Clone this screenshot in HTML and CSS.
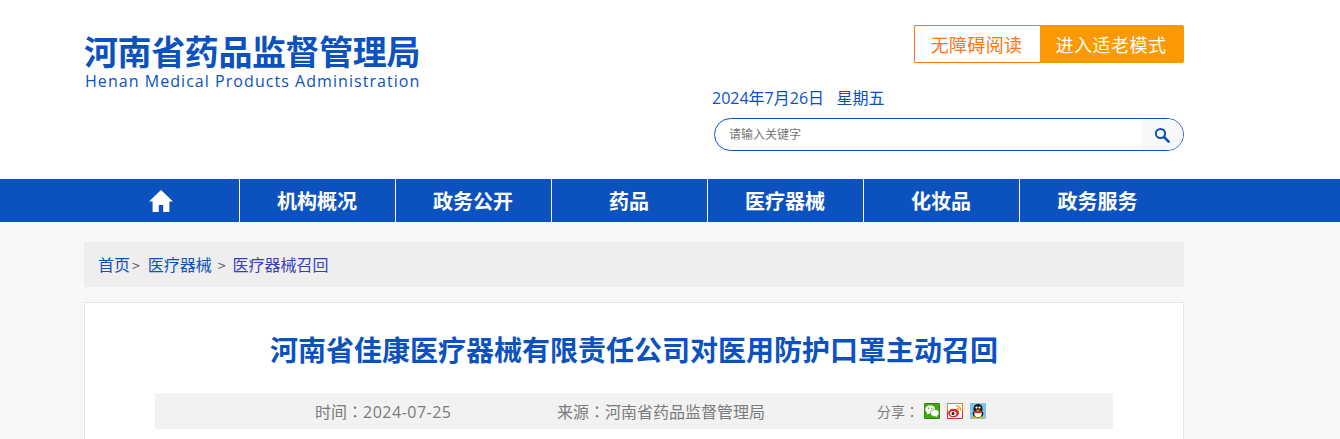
FILE: index.html
```html
<!DOCTYPE html>
<html lang="zh-CN">
<head>
<meta charset="utf-8">
<title>河南省佳康医疗器械有限责任公司对医用防护口罩主动召回</title>
<link rel="stylesheet" href="styles.css">
</head>
<body>
<header class="header">
  <div class="wrap header-inner">
    <div class="logo">
      <div class="logo-cn">河南省药品监督管理局</div>
      <div class="logo-en">Henan Medical Products Administration</div>
    </div>
    <div class="tools">
      <div class="access">
        <a class="access-a">无障碍阅读</a>
        <a class="access-b">进入适老模式</a>
      </div>
      <div class="date">2024年7月26日&nbsp;&nbsp;&nbsp;星期五</div>
      <div class="search">
        <span class="search-text">请输入关键字</span>
        <span class="search-btn">
          <svg width="16" height="16" viewBox="0 0 16 16"><circle cx="6.5" cy="6.5" r="4.6" fill="none" stroke="#0b52bf" stroke-width="2"/><path d="M10 10l4.6 4.6" stroke="#0b52bf" stroke-width="2.6" stroke-linecap="round"/></svg>
        </span>
      </div>
    </div>
  </div>
</header>
<nav class="nav">
  <div class="wrap nav-inner">
    <a class="nav-item nav-home">
      <svg width="26" height="24" viewBox="0 0 26 24"><path d="M13 1L1 12.6h3.6V23h6.2v-7h4.4v7h6.2V12.6H25z" fill="#fff"/></svg>
    </a>
    <a class="nav-item">机构概况</a>
    <a class="nav-item">政务公开</a>
    <a class="nav-item">药品</a>
    <a class="nav-item">医疗器械</a>
    <a class="nav-item">化妆品</a>
    <a class="nav-item nav-last">政务服务</a>
  </div>
</nav>
<main class="wrap">
  <div class="crumb">
    <a>首页</a><span class="sep-a">&gt;</span><a>医疗器械</a><span class="sep-b">&gt;</span><a class="crumb-last">医疗器械召回</a>
  </div>
  <article class="card">
    <h1 class="title">河南省佳康医疗器械有限责任公司对医用防护口罩主动召回</h1>
    <div class="meta">
      <span class="meta-time">时间<span class="colon" lang="zh-Hant">：</span><span class="num">2024-07-25</span></span>
      <span class="meta-source">来源<span class="colon" lang="zh-Hant">：</span>河南省药品监督管理局</span>
      <span class="share">
        <span class="share-label">分享<span class="colon" lang="zh-Hant">：</span></span>
        <svg class="share-icon" width="16" height="16" viewBox="0 0 16 16"><rect width="16" height="16" rx="1" fill="#3fa714"/><rect x=".5" y=".5" width="15" height="15" rx="1" fill="none" stroke="#2f8a0c"/><ellipse cx="6.2" cy="6.4" rx="5" ry="4.2" fill="#fff"/><path d="M3.600 9.500l-.6 2.300 2.800-1.500z" fill="#fff"/><circle cx="4.600" cy="5.200" r=".7" fill="#3fa714"/><circle cx="7.800" cy="5.200" r=".7" fill="#3fa714"/><ellipse cx="10.800" cy="10" rx="4.200" ry="3.500" fill="#fff" stroke="#3fa714" stroke-width=".8"/><path d="M12.500 12.800l.6 1.500-2-1z" fill="#fff"/></svg>
        <svg class="share-icon" width="16" height="16" viewBox="0 0 16 16"><rect x=".5" y=".5" width="15" height="15" fill="#fff" stroke="#e0301c"/><path d="M.5 8V.5H15.500V8" fill="none" stroke="#f0802a"/><ellipse cx="6.600" cy="10" rx="5.400" ry="4.200" fill="#d9252a"/><ellipse cx="6.200" cy="10.400" rx="3.200" ry="2.500" fill="#fff"/><circle cx="6" cy="10.600" r="1.500" fill="#222"/><path d="M9.500 3a4.200 4.200 0 0 1 4.200 4.800M9.800 5.300a2 2 0 0 1 1.900 2.300" fill="none" stroke="#f39a1e" stroke-width="1.300"/></svg>
        <svg class="share-icon" width="16" height="16" viewBox="0 0 16 16"><rect width="16" height="16" rx="1" fill="#7cc4ee"/><ellipse cx="8" cy="6" rx="4.600" ry="5.200" fill="#1b1b1b"/><ellipse cx="8" cy="10.800" rx="5.400" ry="4" fill="#1b1b1b"/><ellipse cx="8" cy="10.800" rx="3.700" ry="3.400" fill="#fff"/><path d="M3.400 8h9.200l-1.200 2H4.600z" fill="#e8261b"/><path d="M5.600 6.800h4.800L8 8.200z" fill="#f7b500"/><circle cx="6.500" cy="4.600" r="1.100" fill="#fff"/><circle cx="9.500" cy="4.600" r="1.100" fill="#fff"/><ellipse cx="4.800" cy="14.500" rx="2.400" ry="1" fill="#f7b500"/><ellipse cx="11.200" cy="14.500" rx="2.400" ry="1" fill="#f7b500"/></svg>
      </span>
    </div>
  </article>
</main>
</body>
</html>
```

FILE: styles.css
```css
* { box-sizing: border-box; }
html, body { margin: 0; padding: 0; height: 439px; overflow: hidden; }
body {
  background: #f6f8f8;
  font-family: "Noto Sans CJK SC", "Open Sans", sans-serif;
  color: #0b52bf;
}
.wrap { width: 1100px; margin-left: 84px; }
.header { background: #fff; height: 179px; }
.header-inner { display: flex; justify-content: space-between; height: 179px; }
.logo { padding-top: 35px; width: 340px; }
.logo-cn {
  font-family: "Liberation Sans", "Noto Sans CJK SC", sans-serif;
  font-size: 34px;
  font-weight: 700;
  line-height: 36px;
  letter-spacing: -0.4px;
  white-space: nowrap;
  color: #0b52bf;
}
.logo-en {
  font-family: "Open Sans", "Noto Sans", sans-serif;
  font-size: 16px;
  line-height: 20px;
  letter-spacing: 1.05px;
  margin-left: 1px;
  white-space: nowrap;
}
.tools { width: 472px; padding-top: 25px; display: flex; flex-direction: column; align-items: flex-start; }
.access { display: flex; align-self: flex-end; height: 38px; font-size: 18px; line-height: 38px; letter-spacing: 0.3px; }
.access-a {
  width: 126px;
  text-align: center;
  color: #ff7415;
  background: #fff;
  border: 1px solid #ff7415;
  border-right: 0;
  border-radius: 2px 0 0 2px;
  line-height: 36px;
  padding-right: 2px;
}
.access-b {
  width: 144px;
  padding-right: 2px;
  text-align: center;
  color: #fff;
  background: #fb9903;
  border-radius: 0 2px 2px 0;
  line-height: 38px;
  letter-spacing: 0.5px;
}
.date {
  font-family: "Open Sans", "Noto Sans CJK SC", sans-serif;
  font-size: 16px;
  line-height: 22px;
  margin-top: 24px;
  color: #0b52bf;
  white-space: nowrap;
}
.search {
  margin: 9px 0 0 2px;
  width: 470px;
  height: 33px;
  border: 1px solid #0b52bf;
  border-radius: 17px;
  display: flex;
  justify-content: space-between;
  align-items: center;
  overflow: hidden;
  background: #fff;
}
.search-text { font-size: 12px; color: #757575; padding-left: 14px; line-height: 29px; margin-bottom: 2px; }
.search-btn {
  width: 41px;
  height: 31px;
  background: #f7f8fa;
  display: flex;
  align-items: center;
  justify-content: center;
  padding-right: 2px;
}
.nav { background: #0b52bf; height: 43px; }
.nav-inner { display: flex; }
.nav-item {
  width: 156px;
  height: 43px;
  line-height: 44px;
  text-align: center;
  color: #fff;
  font-size: 20px;
  font-weight: 700;
  border-right: 1px solid #fff;
  padding-right: 1px;
  display: block;
}
.nav-last { border-right: 0; }
.nav-home { display: flex; align-items: center; justify-content: center; }
.crumb {
  margin-top: 20px;
  height: 45px;
  background: #eeeeee;
  padding-left: 14px;
  font-size: 16px;
  line-height: 44px;
  color: #0b52bf;
  white-space: nowrap;
}
.sep-a { color: #555; margin: 0 8px 0 2px; font-size: 14px; }
.sep-b { color: #555; margin: 0 7px 0 6px; font-size: 14px; }
.crumb-last { color: #3a3fc0; }
.card {
  margin-top: 15px;
  height: 300px;
  background: #fff;
  border: 1px solid #e5e5e5;
  padding: 0 70px;
}
.title {
  margin: 0;
  padding-top: 24px;
  height: 90px;
  font-size: 28px;
  font-weight: 700;
  line-height: 44px;
  text-align: center;
  color: #0b52bf;
}
.meta {
  height: 36px;
  background: #f2f2f2;
  display: flex;
  align-items: center;
  padding-left: 160px;
  font-size: 16px;
  color: #7b7b7b;
  white-space: nowrap;
}
.colon { font-family: "Noto Sans CJK TC", sans-serif; }
.num { font-family: "Open Sans", sans-serif; letter-spacing: 0.5px; }
.meta-time { width: 242px; }
.meta-source { width: 320px; }
.share { display: flex; align-items: center; }
.share-label { font-size: 14px; width: 47px; }
.share-icon { margin-right: 7px; display: block; }
```
